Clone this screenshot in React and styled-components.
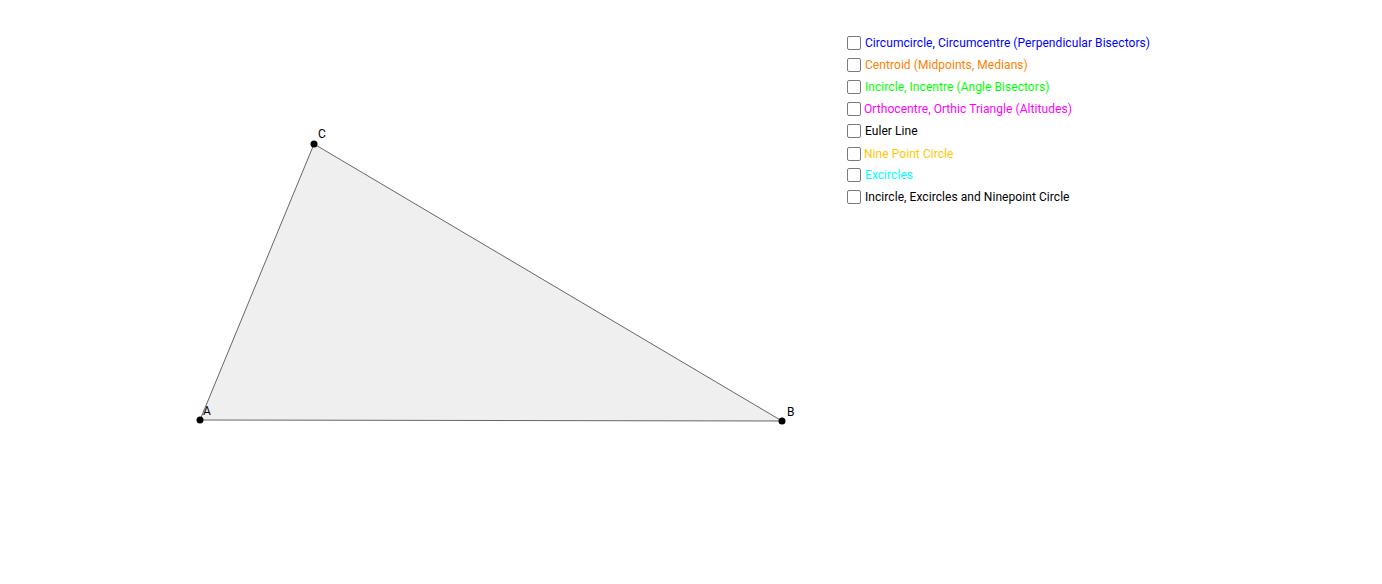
import styled, { createGlobalStyle } from "styled-components";

const Global = createGlobalStyle`
    html, body {
        margin: 0;
        padding: 0;
        background: #fff;
    }
    body {
        font-family: Roboto, "Liberation Sans", sans-serif;
    }
`;

const Page = styled.div`
    width: 1382px;
    height: 584px;
    display: flex;
    overflow: hidden;
`;

const Canvas = styled.svg`
    width: 847px;
    height: 584px;
    flex: none;
    display: block;
`;

const Panel = styled.div`
    display: flex;
    flex-direction: column;
    padding-top: 32px;
`;

const Row = styled.label`
    display: flex;
    align-items: center;
    height: 22px;
    margin-top: ${({ shift }) => shift || 0}px;
    gap: 4px;
    font-size: 12px;
    letter-spacing: 0.06px;
    color: ${({ color }) => color};
    cursor: pointer;
    white-space: nowrap;
`;

const Box = styled.span`
    width: 14px;
    height: 14px;
    box-sizing: border-box;
    border: 1.5px solid #7b7b7b;
    border-radius: 2px;
    background: #fff;
    flex: none;
`;

const Label = styled.span`
    margin-left: ${({ nudge }) => nudge || 0}px;
`;

const items = [
    { text: "Circumcircle, Circumcentre (Perpendicular Bisectors)", color: "#0000ff" },
    { text: "Centroid (Midpoints, Medians)", color: "#ff7f00" },
    { text: "Incircle, Incentre (Angle Bisectors)", color: "#00ff00" },
    { text: "Orthocentre, Orthic Triangle (Altitudes)", color: "#ff00ff", nudge: -1 },
    { text: "Euler Line", color: "#000000" },
    { text: "Nine Point Circle", color: "#ffc800", shift: 1, nudge: -1 },
    { text: "Excircles", color: "#00ffff", shift: -1 },
    { text: "Incircle, Excircles and Ninepoint Circle", color: "#000000" },
];

const points = [
    { name: "A", x: 200, y: 420, lx: 203, ly: 415 },
    { name: "B", x: 782, y: 421, lx: 787, ly: 416 },
    { name: "C", x: 314, y: 144, lx: 318, ly: 138 },
];

const Triangle = () => (
    <Canvas viewBox="0 0 847 584">
        <polygon
            points={points.map((p) => `${p.x},${p.y}`).join(" ")}
            fill="#efefef"
            stroke="#666"
            strokeWidth="1"
        />
        {points.map((p) => (
            <g key={p.name}>
                <circle cx={p.x} cy={p.y} r="3.5" fill="#000" />
                <text x={p.lx} y={p.ly} fontSize="12" fontFamily="Roboto, sans-serif" fill="#000">
                    {p.name}
                </text>
            </g>
        ))}
    </Canvas>
);

const App = () => (
    <Page>
        <Global />
        <Triangle />
        <Panel>
            {items.map((it) => (
                <Row key={it.text} color={it.color} shift={it.shift}>
                    <Box />
                    <Label nudge={it.nudge}>{it.text}</Label>
                </Row>
            ))}
        </Panel>
    </Page>
);

export default App;
